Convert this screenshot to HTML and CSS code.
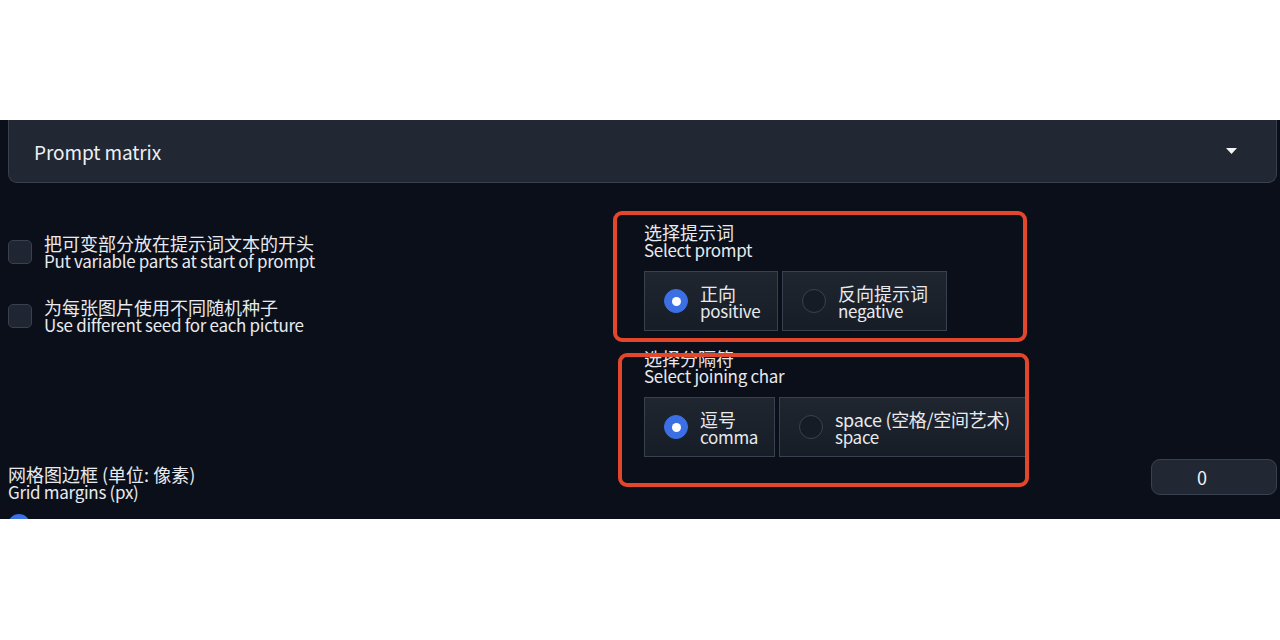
FILE: index.html
```html
<!DOCTYPE html>
<html lang="zh">
<head>
<meta charset="utf-8">
<link rel="stylesheet" href="styles.css">
</head>
<body>
<div class="panel">
  <div class="dropdown">
    <span class="dd-value">Prompt matrix</span>
    <svg class="dd-arrow" width="11" height="6" viewBox="0 0 11 6"><path d="M0 0H11L5.5 6Z" fill="#f3f4f6"/></svg>
  </div>

  <div class="row">
    <div class="col-left">
      <label class="check">
        <span class="box"></span>
        <span class="txt"><span>把可变部分放在提示词文本的开头</span><span class="en">Put variable parts at start of prompt</span></span>
      </label>
      <label class="check">
        <span class="box"></span>
        <span class="txt"><span>为每张图片使用不同随机种子</span><span class="en">Use different seed for each picture</span></span>
      </label>
    </div>
    <div class="col-right">
      <div class="group">
        <div class="txt"><span>选择提示词</span><span class="en">Select prompt</span></div>
        <div class="options">
          <div class="opt o-pos"><span class="radio on"></span><span class="txt"><span>正向</span><span class="en">positive</span></span></div>
          <div class="opt o-neg"><span class="radio"></span><span class="txt"><span>反向提示词</span><span class="en">negative</span></span></div>
        </div>
      </div>
      <div class="group g2">
        <div class="txt"><span>选择分隔符</span><span class="en">Select joining char</span></div>
        <div class="options">
          <div class="opt o-comma"><span class="radio on"></span><span class="txt"><span>逗号</span><span class="en">comma</span></span></div>
          <div class="opt o-space"><span class="radio"></span><span class="txt"><span class="mixed">space (空格/空间艺术)</span><span class="en">space</span></span></div>
        </div>
      </div>
    </div>
  </div>

  <div class="slider">
    <div class="slider-head">
      <div class="txt slabel"><span>网格图边框 (单位: 像素)</span><span class="en">Grid margins (px)</span></div>
      <div class="num">0</div>
    </div>
    <div class="track"><span class="thumb"></span></div>
  </div>

  <div class="mark mark1"></div>
  <div class="mark mark2"></div>
</div>
</body>
</html>
```

FILE: styles.css
```css
html, body {
  margin: 0;
  padding: 0;
  background: #ffffff;
}
body {
  font-family: "Noto Sans CJK SC", "Noto Sans", sans-serif;
  color: #e5e7eb;
}
.panel {
  position: relative;
  margin-top: 120px;
  height: 399px;
  overflow: hidden;
  background: #0b0f19;
  padding: 0 3px 0 8px;
  box-sizing: border-box;
}
.dropdown {
  height: 63px;
  box-sizing: border-box;
  background: #212833;
  border: 1px solid #394150;
  border-top: none;
  border-radius: 0 0 9px 9px;
  display: flex;
  align-items: center;
  justify-content: space-between;
  padding: 0 39px 0 25px;
}
.dd-value {
  font-size: 19px;
  letter-spacing: -0.1px;
  color: #eef0f3;
}
.dd-arrow { display: block; }

.row {
  display: grid;
  grid-template-columns: 612px 1fr;
  column-gap: 24px;
  margin-top: 40px;
}
.txt {
  display: flex;
  flex-direction: column;
  font-size: 18px;
  line-height: 18px;
  color: #e8eaee;
  white-space: nowrap;
}
.txt .en {
  font-size: 17px;
  letter-spacing: -0.3px;
}
.txt .mixed {
  letter-spacing: -0.3px;
}
.col-left {
  padding-top: 11px;
  display: flex;
  flex-direction: column;
  gap: 28px;
}
.check {
  display: flex;
  align-items: center;
  gap: 12px;
}
.box {
  width: 24px;
  height: 24px;
  box-sizing: border-box;
  border-radius: 5px;
  background: #1f2632;
  border: 1px solid #394150;
  flex: none;
}
.group .options {
  display: flex;
  gap: 4px;
  margin-top: 12px;
}
.g2 { margin-top: 18px; }
.g2 .options { margin-top: 12px; }
.opt {
  display: flex;
  align-items: center;
  gap: 12px;
  box-sizing: border-box;
  height: 60px;
  padding: 0 12px 0 19px;
  border: 1px solid #394150;
  background: linear-gradient(#1f2630, #171d27);
  flex: none;
}
.opt .txt { padding-top: 2px; }
.o-pos { width: 134px; }
.o-neg { width: 165px; }
.o-comma { width: 131px; }
.o-space { width: 247px; }
.radio {
  width: 24px;
  height: 24px;
  box-sizing: border-box;
  border-radius: 50%;
  border: 1px solid #3a4250;
  background: #161c26;
  flex: none;
  display: flex;
  align-items: center;
  justify-content: center;
}
.radio.on {
  background: #3b6fe3;
  border-color: #3b6fe3;
}
.radio.on::after {
  content: "";
  width: 9px;
  height: 9px;
  border-radius: 50%;
  background: #ffffff;
}

.slider { margin-top: 2px; }
.slider-head {
  display: flex;
  justify-content: space-between;
  align-items: flex-start;
}
.slabel { padding-top: 6px; }
.num {
  width: 126px;
  height: 36px;
  box-sizing: border-box;
  border: 1px solid #394150;
  border-radius: 9px;
  background: #212833;
  font-size: 18px;
  display: flex;
  align-items: center;
  justify-content: center;
  padding-right: 24px;
  color: #f1f3f5;
}
.track {
  margin-top: 13px;
  height: 22px;
}
.thumb {
  display: block;
  width: 22px;
  height: 22px;
  border-radius: 50%;
  background: #3b6fe3;
}

.mark {
  position: absolute;
  border: 4px solid #e2472c;
  border-radius: 9px;
  box-sizing: border-box;
  pointer-events: none;
}
.mark1 {
  left: 613px;
  top: 91px;
  width: 414px;
  height: 131px;
}
.mark2 {
  left: 618px;
  top: 233px;
  width: 411px;
  height: 134px;
}
```
